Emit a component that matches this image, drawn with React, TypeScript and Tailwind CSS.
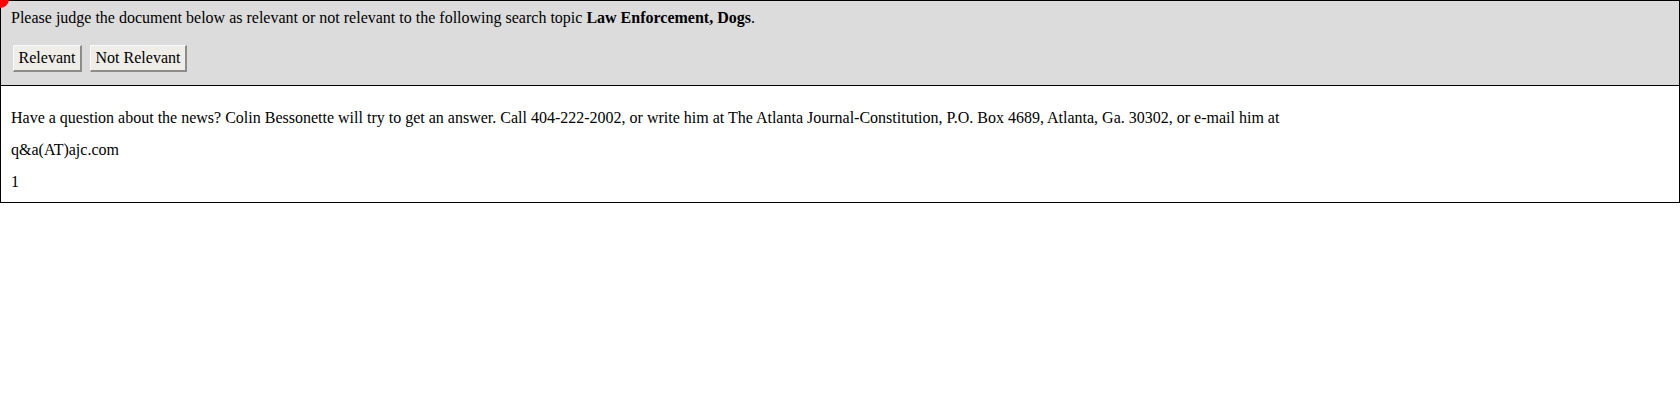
import React from 'react';

// relevance judging page: topic header with two buttons, then the document text

const topic = 'Law Enforcement, Dogs';

const docLines = [
  'Have a question about the news? Colin Bessonette will try to get an answer. Call 404-222-2002, or write him at The Atlanta Journal-Constitution, P.O. Box 4689, Atlanta, Ga. 30302, or e-mail him at',
  'q&a(AT)ajc.com',
  '1',
];

const JudgeButton: React.FC<{ label: string; width: string }> = ({ label, width }) => (
  <button
    className={`h-[27px] ${width} bg-[#efede8] text-[16px] leading-none text-black border-t border-l border-t-[#fafafa] border-l-[#fafafa] border-r-2 border-b-2 border-r-[#8c8c8c] border-b-[#8c8c8c]`}
  >
    {label}
  </button>
);

const App: React.FC = () => {
  return (
    <div className="relative w-[1680px] h-[400px] bg-white text-black text-[16px] font-['Liberation_Serif','Times_New_Roman',serif]">
      <div className="h-[86px] border border-black bg-[#dcdcdc] pl-[10px] pt-[8px]">
        <div className="leading-[18px]">
          Please judge the document below as relevant or not relevant to the following search topic{' '}
          <b>{topic}</b>.
        </div>
        <div className="flex gap-[8px] mt-[18px] ml-[2px]">
          <JudgeButton label="Relevant" width="w-[69px]" />
          <JudgeButton label="Not Relevant" width="w-[97px]" />
        </div>
      </div>
      <div className="border border-t-0 border-black pl-[10px] pt-[16px] pb-[4px]">
        {docLines.map((line, i) => (
          <div key={i} className="leading-[32px] whitespace-nowrap">
            {line}
          </div>
        ))}
      </div>
      {/* red cursor marker in the corner */}
      <div className="absolute left-[-9px] top-[-10px] w-[18px] h-[18px] rounded-full bg-[#ff0000]" />
    </div>
  );
};

export default App;
